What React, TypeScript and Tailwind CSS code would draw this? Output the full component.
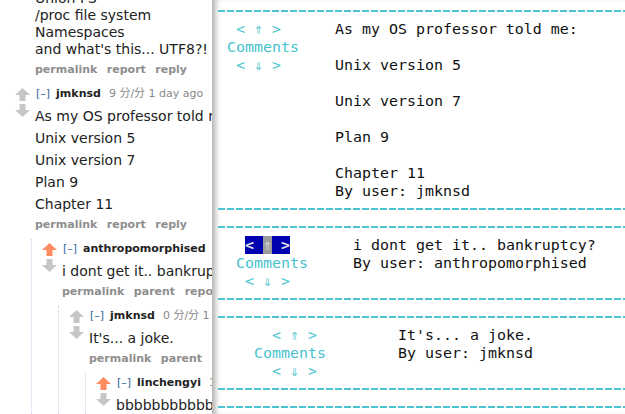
import type { ReactNode } from "react";

const cyan = "text-[#47c3ce]";

function Arrow({ down, active }: { down?: boolean; active?: boolean }) {
    return (
        <svg width="15" height="13" viewBox="0 0 15 13" className={down ? "rotate-180" : ""}>
            <path d="M7.5 0L15 7H10.5V13H4.5V7H0Z" fill={active ? "#ff8b60" : "#c6c6c6"} />
        </svg>
    );
}

type CommentProps = {
    user: string;
    time: string;
    body: string[];
    buttons: string[];
    up?: boolean;
    children?: ReactNode;
};

function Comment({ user, time, body, buttons, up, children }: CommentProps) {
    return (
        <div className="flex">
            <div className="w-[15px] mr-[5px] shrink-0 flex flex-col">
                <div className="mt-[3.5px] h-[13px]"><Arrow active={up} /></div>
                <div className="mt-[3px] h-[13px]"><Arrow down /></div>
            </div>
            <div className="min-w-0 flex-1">
                {/* tagline */}
                <div className="h-[17px] leading-[17px] text-[11px] whitespace-nowrap">
                    <span className="px-[1px] text-[#336699]">[–]</span>
                    <span className="ml-[5px] font-bold text-[#222]">{user}</span>
                    <span className="ml-[8px] text-[#888]">{time}</span>
                </div>
                {body.map((line, i) => (
                    <p key={i} className={`${i === 0 ? "mt-[6px]" : "mt-[5px]"} h-[17px] leading-[17px] text-[14px] text-[#222] whitespace-nowrap`}>
                        {line}
                    </p>
                ))}
                <div className="mt-[3px] flex gap-[9.5px] h-[17px] leading-[17px] text-[11px] font-bold text-[#8e8e8e] whitespace-nowrap">
                    {buttons.map((b) => (
                        <span key={b}>{b}</span>
                    ))}
                </div>
                {children && (
                    <div className="-ml-[4px] mt-[6px] pt-[1px] pl-[10px] border-l border-dotted border-[#cfcff0]">
                        {children}
                    </div>
                )}
            </div>
        </div>
    );
}

function Rule() {
    return (
        <div className="flex h-[18px] items-center">
            <div className="h-[2px] w-full bg-[repeating-linear-gradient(90deg,#4cc4cf_0px,#4cc4cf_7px,transparent_7px,transparent_9px)]" />
        </div>
    );
}

function Nav({ down, active, pad }: { down?: boolean; active?: boolean; pad: string }) {
    const glyph = down ? "⇓" : "⇑";
    return (
        <div className={`${pad} flex h-[18px] leading-[18px]`}>
            {active ? (
                <div className="flex bg-[#0000b0] text-[#e4e4e4] font-bold">
                    <span className="w-[9px] text-center">&lt;</span>
                    <span className="w-[9px]"> </span>
                    <span className="w-[9px] text-center bg-[#9c9c9c] text-[#dedede] font-normal">{glyph}</span>
                    <span className="w-[9px]"> </span>
                    <span className="w-[9px] text-center">&gt;</span>
                </div>
            ) : (
                <div className={`flex ${cyan}`}>
                    <span className="w-[9px] text-center">&lt;</span>
                    <span className="w-[9px]"> </span>
                    <span className="w-[9px] text-center">{glyph}</span>
                    <span className="w-[9px]"> </span>
                    <span className="w-[9px] text-center">&gt;</span>
                </div>
            )}
        </div>
    );
}

function Block({ width, navPad, labelPad, lines, active }: { width: string; navPad: string; labelPad: string; lines: string[]; active?: boolean }) {
    return (
        <div className="flex">
            <div className={`${width} shrink-0`}>
                <Nav pad={navPad} active={active} />
                <div className={`${labelPad} h-[18px] leading-[18px] ${cyan}`}>Comments</div>
                <Nav pad={navPad} down />
            </div>
            <div className="text-[#111]">
                {lines.map((l, i) => (
                    <div key={i} className="h-[18px] leading-[18px] whitespace-pre">{l}</div>
                ))}
            </div>
        </div>
    );
}

export default function App() {
    return (
        <div className="relative h-[414px] w-[625px] overflow-hidden bg-white font-['DejaVu_Sans','Noto_Sans_CJK_SC',sans-serif]">
            <div className="-mt-[10.5px]">
                {/* tail of the previous comment */}
                <div className="pl-[35px]">
                    <p className="leading-[17px] text-[14px] text-[#222] whitespace-nowrap">
                        Union FS<br />
                        /proc file system<br />
                        Namespaces<br />
                        and what's this... UTF8?!
                    </p>
                    <div className="mt-[3px] flex gap-[9.5px] h-[17px] leading-[17px] text-[11px] font-bold text-[#8e8e8e]">
                        <span>permalink</span>
                        <span>report</span>
                        <span>reply</span>
                    </div>
                </div>

                <div className="mt-[7px] pl-[15px]">
                    <Comment
                        user="jmknsd"
                        time="9 分/分 1 day ago"
                        body={["As my OS professor told me:", "Unix version 5", "Unix version 7", "Plan 9", "Chapter 11"]}
                        buttons={["permalink", "report", "reply"]}
                    >
                        <Comment
                            user="anthropomorphised"
                            time="1 分/分 1 day ago"
                            up
                            body={["i dont get it.. bankruptcy?"]}
                            buttons={["permalink", "parent", "report", "reply"]}
                        >
                            <Comment
                                user="jmknsd"
                                time="0 分/分 1 day ago"
                                body={["It's... a joke."]}
                                buttons={["permalink", "parent", "report", "reply"]}
                            >
                                <Comment
                                    user="linchengyi"
                                    time="1 分/分 1 day ago"
                                    up
                                    body={["bbbbbbbbbbbbbbbbbbbbbbbbbbbbbb"]}
                                    buttons={["permalink", "parent", "report", "reply"]}
                                />
                            </Comment>
                        </Comment>
                    </Comment>
                </div>
            </div>

            {/* text-mode comment viewer laid over the page */}
            <div className="absolute inset-y-0 right-0 left-[212px] overflow-hidden bg-white pl-[6px] pt-[2px] shadow-[inset_7px_0_6px_-4px_rgba(0,0,0,0.35)] font-['DejaVu_Sans_Mono',monospace] text-[14.95px]">
                <Rule />
                <Block
                    width="w-[117px]"
                    navPad="pl-[18px]"
                    labelPad="pl-[9px]"
                    lines={["As my OS professor told me:", "", "Unix version 5", "", "Unix version 7", "", "Plan 9", "", "Chapter 11", "By user: jmknsd"]}
                />
                <Rule />
                <Rule />
                <Block
                    width="w-[135px]"
                    navPad="pl-[27px]"
                    labelPad="pl-[18px]"
                    active
                    lines={["i dont get it.. bankruptcy?", "By user: anthropomorphised"]}
                />
                <Rule />
                <Rule />
                <Block
                    width="w-[180px]"
                    navPad="pl-[54px]"
                    labelPad="pl-[36px]"
                    lines={["It's... a joke.", "By user: jmknsd"]}
                />
                <Rule />
                <Rule />
            </div>
        </div>
    );
}
